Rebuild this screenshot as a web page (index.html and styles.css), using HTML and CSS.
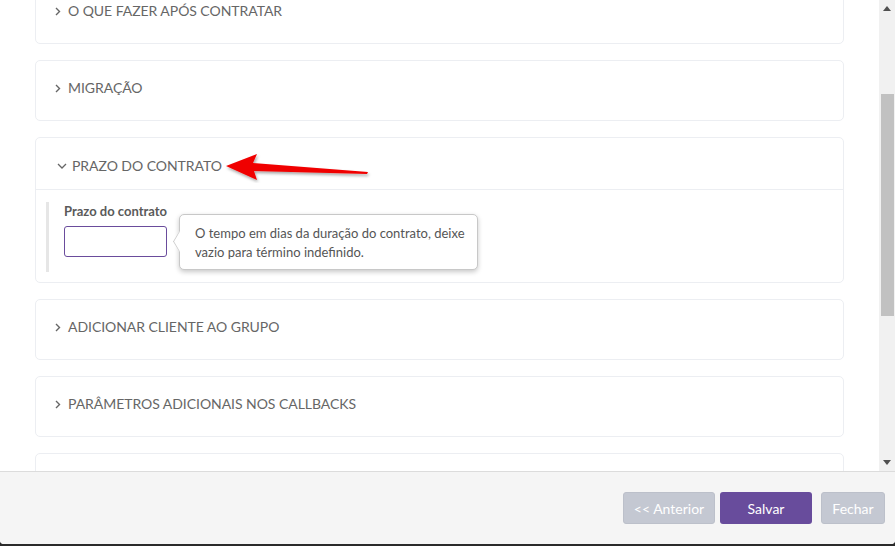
FILE: index.html
```html
<!DOCTYPE html>
<html lang="pt">
<head>
<meta charset="utf-8">
<link rel="stylesheet" href="styles.css">
</head>
<body>
<div class="modal">
  <div class="main">
    <div class="scroll">
      <div class="list">
        <div class="card">
          <div class="card-head"><svg class="chev" width="6" height="9" viewBox="0 0 6 9"><path d="M1 1 L4.5 4.5 L1 8" fill="none" stroke="#666" stroke-width="1.4"/></svg>O QUE FAZER APÓS CONTRATAR</div>
        </div>
        <div class="card">
          <div class="card-head"><svg class="chev" width="6" height="9" viewBox="0 0 6 9"><path d="M1 1 L4.5 4.5 L1 8" fill="none" stroke="#666" stroke-width="1.4"/></svg>MIGRAÇÃO</div>
        </div>
        <div class="card open">
          <div class="card-head">
            <svg class="chev-down" width="10" height="6" viewBox="0 0 10 6"><path d="M1 1 L5 5 L9 1" fill="none" stroke="#666" stroke-width="1.3"/></svg>
            <span class="title">PRAZO DO CONTRATO</span>
            <svg class="red-arrow" width="150" height="32" viewBox="0 0 150 32">
              <defs><filter id="sh" x="-10%" y="-30%" width="130%" height="180%"><feDropShadow dx="1" dy="2" stdDeviation="1.5" flood-color="#000" flood-opacity="0.35"/></filter></defs>
              <path d="M2 15 L33 3 L29 12 L144 21 L143 23 L30 20 L33 29 Z" fill="#f00000" filter="url(#sh)"/>
            </svg>
          </div>
          <div class="card-body">
            <div class="field">
              <label class="label">Prazo do contrato</label>
              <div class="input-row">
                <div class="input"></div>
                <div class="tooltip">O tempo em dias da duração do contrato, deixe vazio para término indefinido.</div>
              </div>
            </div>
          </div>
        </div>
        <div class="card">
          <div class="card-head"><svg class="chev" width="6" height="9" viewBox="0 0 6 9"><path d="M1 1 L4.5 4.5 L1 8" fill="none" stroke="#666" stroke-width="1.4"/></svg>ADICIONAR CLIENTE AO GRUPO</div>
        </div>
        <div class="card">
          <div class="card-head"><svg class="chev" width="6" height="9" viewBox="0 0 6 9"><path d="M1 1 L4.5 4.5 L1 8" fill="none" stroke="#666" stroke-width="1.4"/></svg>PARÂMETROS ADICIONAIS NOS CALLBACKS</div>
        </div>
        <div class="card">
          <div class="card-head">&nbsp;</div>
        </div>
      </div>
    </div>
    <div class="scrollbar">
      <div class="sb-btn"><svg width="8" height="5" viewBox="0 0 8 5"><path d="M0 5 L4 0 L8 5 Z" fill="#505050"/></svg></div>
      <div class="sb-track"><div class="sb-thumb"></div></div>
      <div class="sb-btn"><svg width="8" height="5" viewBox="0 0 8 5"><path d="M0 0 L8 0 L4 5 Z" fill="#505050"/></svg></div>
    </div>
  </div>
  <div class="footer">
    <button class="btn btn-grey btn-prev">&lt;&lt; Anterior</button>
    <button class="btn btn-purple">Salvar</button>
    <button class="btn btn-grey btn-close">Fechar</button>
  </div>
</div>
</body>
</html>
```
FILE: styles.css
```css
* { box-sizing: border-box; }
html, body { margin: 0; padding: 0; }
body {
  width: 895px;
  height: 546px;
  overflow: hidden;
  background: #2a2a2a;
  font-family: Lato, "Open Sans", sans-serif;
}
.modal {
  height: 544px;
  display: flex;
  flex-direction: column;
  background: #fff;
  border-radius: 0 0 4px 4px;
  overflow: hidden;
}
.main {
  height: 471px;
  display: flex;
}
.scroll {
  flex: 1;
  overflow: hidden;
}
.list {
  margin: -17px 35px 0 35px;
  display: flex;
  flex-direction: column;
  gap: 16px;
}
.card {
  border: 1px solid #eceef2;
  border-radius: 5px;
  background: #fff;
}
.card-head {
  height: 59px;
  padding: 17px 20px 0 19px;
  font-size: 14px;
  line-height: 20px;
  color: #666;
  display: flex;
  align-items: flex-start;
  letter-spacing: -0.05px;
}
.chev {
  margin: 6px 7px 0 0;
  flex: none;
}
.open .card-head {
  height: 52px;
  padding: 18px 20px 0 21px;
  border-bottom: 1px solid #eceef2;
  position: relative;
}
.chev-down { margin: 7px 5px 0 0; }
.title { color: #666; }
.red-arrow {
  position: absolute;
  left: 188px;
  top: 13px;
}
.card-body {
  padding: 12px 10px 10px 10px;
  height: 92px;
}
.field {
  border-left: 3px solid #e6e6e6;
  padding: 1px 0 0 15px;
  height: 70px;
}
.label {
  display: block;
  font-size: 13px;
  font-weight: 700;
  color: #5a5a5a;
  line-height: 17px;
  margin-bottom: 6px;
}
.input-row {
  display: flex;
  align-items: flex-start;
  position: relative;
}
.input {
  width: 103px;
  height: 31px;
  border: 1px solid #6a4c9c;
  border-radius: 3px;
  background: #fff;
}
.tooltip {
  position: absolute;
  left: 115px;
  top: -12px;
  width: 299px;
  height: 56px;
  padding: 9px 10px 0 15px;
  font-size: 13px;
  line-height: 19px;
  color: #555;
  background: #fff;
  border: 1px solid #c8c8c8;
  border-radius: 5px;
  box-shadow: 0 2px 5px rgba(0,0,0,0.22);
}
.tooltip::before {
  content: "";
  position: absolute;
  left: -8px;
  top: 19px;
  width: 14px;
  height: 14px;
  background: #fff;
  border-left: 1px solid #c8c8c8;
  border-bottom: 1px solid #c8c8c8;
  transform: scaleX(0.6) rotate(45deg);
}
.scrollbar {
  width: 16px;
  background: #f1f1f1;
  display: flex;
  flex-direction: column;
}
.sb-btn {
  height: 17px;
  display: flex;
  align-items: center;
  justify-content: center;
}
.sb-track {
  flex: 1;
  padding: 77px 1px 0 2px;
}
.sb-thumb {
  height: 222px;
  background: #c1c1c1;
}
.footer {
  flex: 1;
  background: #f5f5f5;
  border-top: 1px solid #dcdcdc;
  display: flex;
  justify-content: flex-end;
  align-items: flex-start;
  padding: 20px 10px 0 0;
  gap: 5px;
}
.btn {
  height: 32px;
  border: none;
  border-radius: 3px;
  font-family: Lato, "Open Sans", sans-serif;
  font-size: 14px;
  color: #fff;
  padding: 0;
}
.btn-grey { background: #c4c8d2; border: 1px solid #bcc0ca; }
.btn-purple { background: #684c9c; width: 92px; }
.btn-prev { width: 92px; }
.btn-close { width: 64px; margin-left: 4px; }
```
